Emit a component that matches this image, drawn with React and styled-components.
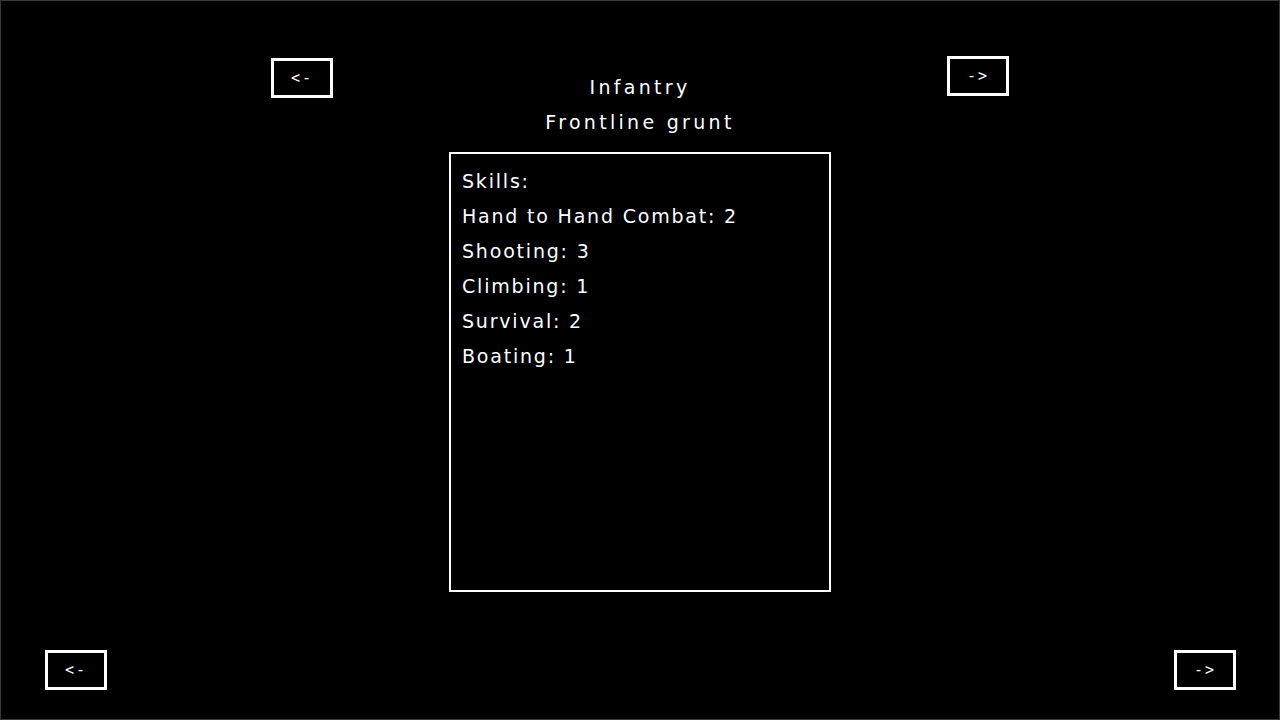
import React from 'react';
import styled, { createGlobalStyle } from 'styled-components';

const GlobalStyle = createGlobalStyle`
  html, body {
    margin: 0;
    padding: 0;
    background: #000;
  }
  * {
    box-sizing: border-box;
  }
`;

const skills = [
  { name: 'Hand to Hand Combat', level: 2 },
  { name: 'Shooting', level: 3 },
  { name: 'Climbing', level: 1 },
  { name: 'Survival', level: 2 },
  { name: 'Boating', level: 1 },
];

export default function App() {
  return (
    <>
      <GlobalStyle />
      <Screen>
        <TopRow>
          <ArrowButton offset={2}>&lt;-</ArrowButton>
          <Center>
            <Title>Infantry</Title>
            <Title>Frontline grunt</Title>
            <SkillBox>
              <Line>Skills:</Line>
              {skills.map(s => (
                <Line key={s.name}>{s.name}: {s.level}</Line>
              ))}
            </SkillBox>
          </Center>
          <ArrowButton>-&gt;</ArrowButton>
        </TopRow>
        <BottomRow>
          <ArrowButton>&lt;-</ArrowButton>
          <ArrowButton>-&gt;</ArrowButton>
        </BottomRow>
      </Screen>
    </>
  );
}

const Screen = styled.div`
  width: 1280px;
  height: 720px;
  background: #000;
  border: 1px solid #3a3a3a;
  display: flex;
  flex-direction: column;
  justify-content: space-between;
  color: #fff;
  font-family: "DejaVu Sans", sans-serif;
`;

const TopRow = styled.div`
  display: flex;
  justify-content: center;
  align-items: flex-start;
  gap: 116px;
  padding-top: 55px;
`;

const BottomRow = styled.div`
  display: flex;
  justify-content: space-between;
  padding: 0 43px 29px 44px;
`;

const ArrowButton = styled.div`
  width: 62px;
  height: 40px;
  margin-top: ${props => props.offset || 0}px;
  border: 3px solid #fff;
  display: flex;
  align-items: center;
  justify-content: center;
  font-family: "DejaVu Sans Mono", monospace;
  font-size: 15px;
  letter-spacing: 2px;
  color: #fff;
  cursor: pointer;
`;

const Center = styled.div`
  display: flex;
  flex-direction: column;
  align-items: center;
  margin-top: 14px;
`;

const Title = styled.div`
  height: 35px;
  line-height: 35px;
  font-size: 19px;
  letter-spacing: 3.3px;
`;

const SkillBox = styled.div`
  width: 382px;
  height: 440px;
  margin-top: 12px;
  border: 2px solid #fff;
  padding: 10px 11px;
`;

const Line = styled.div`
  height: 35px;
  line-height: 35px;
  font-size: 19px;
  letter-spacing: 1.8px;
`;
